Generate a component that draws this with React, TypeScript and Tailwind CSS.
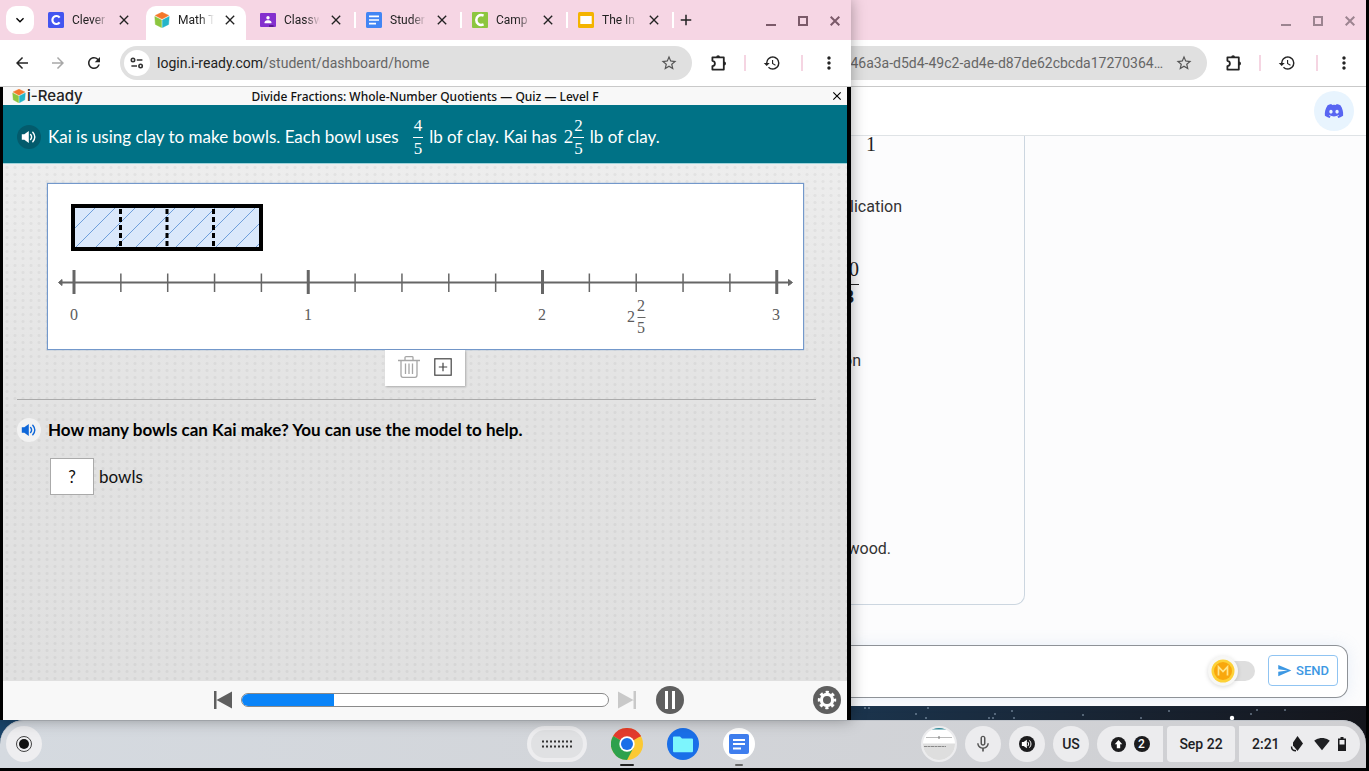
import React, { useState } from "react";
import {
  MdArrowBack,
  MdArrowForward,
  MdRefresh,
  MdStarBorder,
  MdHistory,
  MdMoreVert,
  MdSend,
  MdMicNone,
  MdClose,
  MdAdd,
  MdExpandMore,
  MdSignalWifi4Bar,
} from "react-icons/md";
import { FaDiscord } from "react-icons/fa";

const CubeIcon = ({ className }: { className: string }) => (
  <svg viewBox="0 0 16 16" className={className} aria-hidden="true">
    <path d="M8 0.3 14.6 3.4 8 7 1.4 3.4Z" fill="#f4772b" stroke="#f4772b" strokeWidth=".6" strokeLinejoin="round" />
    <path d="M.8 4.5 7.5 8.1V15.6L1.4 12.4Z" fill="#8cc63f" stroke="#8cc63f" strokeWidth=".5" strokeLinejoin="round" />
    <path d="M15.2 4.5 8.5 8.1V15.6L14.6 12.4Z" fill="#24b5c9" stroke="#24b5c9" strokeWidth=".5" strokeLinejoin="round" />
  </svg>
);

const SpeakerIcon = ({ className }: { className: string }) => (
  <svg viewBox="0 0 16 14" className={className} aria-hidden="true">
    <path d="M.8 4.300H3.300L7.800 1V13L3.300 9.700H.8Z" fill="currentColor" />
    <path d="M9.600 4.500Q11.600 7 9.600 9.500M11.800 2.300Q15.800 7 11.800 11.700" fill="none" stroke="currentColor" strokeWidth="1.400" strokeLinecap="round" />
  </svg>
);

const GearIcon = () => (
  <svg viewBox="0 0 20 20" className="size-5" fill="none" stroke="#fff" aria-hidden="true">
    <circle cx="10" cy="10" r="5.600" strokeWidth="3.200" />
    <circle cx="10" cy="10" r="7.900" strokeWidth="2.600" strokeDasharray="3.200 3.005" strokeDashoffset="1.600" />
  </svg>
);

const CleverIcon = () => (
  <svg viewBox="0 0 16 16" className="size-4 shrink-0">
    <rect width="16" height="16" rx="1.5" fill="#4355f0" />
    <path d="M11.6 5.6A4 4 0 1 0 11.6 10.4" fill="none" stroke="#fff" strokeWidth="2.2" />
  </svg>
);
const CampusIcon = () => (
  <svg viewBox="0 0 16 16" className="size-4 shrink-0">
    <rect width="16" height="16" rx="1" fill="#8dc63f" />
    <path d="M11.6 3.6C7 1.800 4.300 5 4.300 8S7 14.200 11.600 12.400" fill="none" stroke="#fff" strokeWidth="2.6" />
  </svg>
);
const ClassroomIcon = () => (
  <svg viewBox="0 0 16 16" className="size-4 shrink-0">
    <rect y="1" width="16" height="14" rx="1" fill="#8430ce" />
    <circle cx="8" cy="5.8" r="1.7" fill="#fff" />
    <path d="M4.6 11.2V10.2C4.6 8.9 6.6 8.3 8 8.3S11.4 8.9 11.4 10.2V11.2Z" fill="#fff" />
    <path d="M9 13h4.5v2H9z" fill="#5b1a94" />
  </svg>
);
const DocsIcon = () => (
  <svg viewBox="0 0 16 16" className="size-4 shrink-0">
    <rect width="16" height="16" rx="1.5" fill="#4285f4" />
    <path d="M3 4.3h10M3 8h10M3 11.7h7" stroke="#fff" strokeWidth="1.7" />
  </svg>
);
const SlidesIcon = () => (
  <svg viewBox="0 0 16 16" className="size-4 shrink-0">
    <rect width="16" height="16" rx="1.5" fill="#f4b400" />
    <rect x="2.3" y="4" width="11.4" height="8" fill="#fff" />
  </svg>
);

const ExtensionIcon = () => (
  <svg viewBox="0 0 18 18" className="size-[18px]" fill="none" stroke="#242424" strokeWidth="1.8" strokeLinejoin="round">
    <path d="M2.4 3.4H13.8V15.6H2.4V12.2C4 12 4.9 10.9 4.9 9.5S4 7 2.4 6.8Z" />
    <path d="M6.2 3.2a1.9 2 0 0 1 3.8 0ZM14 7.6a2 1.9 0 0 1 0 3.8Z" fill="#242424" stroke="none" />
  </svg>
);

const TuneIcon = () => (
  <svg viewBox="0 0 14 12" className="h-3 w-3.5" fill="none" stroke="#333" strokeWidth="1.6">
    <circle cx="3" cy="3" r="1.7" />
    <path d="M6.8 3H12.4M1.4 9H7" />
    <circle cx="10.6" cy="9" r="1.7" />
  </svg>
);

function WindowControls({ className }: { className: string }) {
  return (
    <div className={`flex items-center gap-[22px] ${className}`}>
      <button aria-label="Minimize">
        <svg viewBox="0 0 10 10" className="size-2.5"><path d="M0 9H10" stroke="currentColor" strokeWidth="2" /></svg>
      </button>
      <button aria-label="Maximize">
        <svg viewBox="0 0 10 10" className="size-2.5"><rect x="1" y="1" width="8" height="8" fill="none" stroke="currentColor" strokeWidth="2" /></svg>
      </button>
      <button aria-label="Close window">
        <svg viewBox="0 0 10 10" className="size-2.5"><path d="M.7.7 9.3 9.3M9.3.7.7 9.3" stroke="currentColor" strokeWidth="2" /></svg>
      </button>
    </div>
  );
}

function ToolbarEnd() {
  return (
    <div className="flex shrink-0 items-center pl-[18px] text-[#242424]">
      <button aria-label="Extensions"><ExtensionIcon /></button>
      <span className="ml-4 h-4 w-[2px] bg-[#f5d5e2]" />
      <button aria-label="History" className="ml-[17px]"><MdHistory className="size-[18px]" /></button>
      <span className="ml-5 h-4 w-[2px] bg-[#f5d5e2]" />
      <button aria-label="Menu" className="ml-4"><MdMoreVert className="size-5" /></button>
    </div>
  );
}

const tabs = [
  { title: "Clever", icon: <CleverIcon /> },
  { title: "Math T", icon: <CubeIcon className="size-4 shrink-0" />, active: true },
  { title: "Classw", icon: <ClassroomIcon /> },
  { title: "Studer", icon: <DocsIcon /> },
  { title: "Camp", icon: <CampusIcon /> },
  { title: "The In", icon: <SlidesIcon /> },
];

function TabStrip() {
  return (
    <div className="flex h-10 items-start bg-[#f6d6e4] pl-1.5">
      <button aria-label="Search tabs" className="mt-1.5 flex size-7 items-center justify-center rounded-[10px] bg-white">
        <MdExpandMore className="size-4" />
      </button>
      <div className="ml-1.5 flex h-10 items-start">
        {tabs.map((t, i) => (
          <React.Fragment key={t.title}>
            <div
              className={
                t.active
                  ? "mt-1.5 flex h-[34px] w-[100px] items-start rounded-t-[10px] bg-white px-2 pt-1.5"
                  : "mt-1.5 flex h-[34px] w-[100px] items-start px-2 pt-1.5"
              }
            >
              {t.icon}
              <button className="ml-2 w-9 overflow-hidden text-left text-[12px] leading-4 whitespace-nowrap text-[#222] [mask-image:linear-gradient(to_right,black_60%,transparent)]">
                {t.title}
              </button>
              <button aria-label={`Close ${t.title}`} className="ml-auto text-[#222]">
                <MdClose className="size-4" />
              </button>
            </div>
            <span className={i < 2 ? "mx-[2px] mt-3 h-4 w-[2px]" : "mx-[2px] mt-3 h-4 w-[2px] bg-white"} />
          </React.Fragment>
        ))}
      </div>
      <button aria-label="New tab" className="mt-[11px] ml-px text-[#222]"><MdAdd className="size-[18px]" /></button>
      <WindowControls className="mt-4 mr-[11px] ml-auto text-[#7b5a69]" />
    </div>
  );
}

function Fraction({ n, d, className }: { n: string; d: string; className: string }) {
  return (
    <span className={`inline-flex flex-col items-center font-['Liberation_Serif',serif] ${className}`}>
      <span className="px-px">{n}</span>
      <span className="border-t border-current px-px">{d}</span>
    </span>
  );
}

const hatch = Array.from({ length: 12 }, (_, i) => 71 + i * 20);

function NumberLine() {
  const step = 46.85;
  return (
    <svg viewBox="0 0 755 165" className="block w-full" role="img" aria-label="Number line">
      <defs>
        <clipPath id="bar"><rect x="26" y="23" width="186" height="42" /></clipPath>
      </defs>
      <rect x="25" y="22" width="188" height="43" fill="#dae8fb" />
      <g clipPath="url(#bar)" stroke="#6f9fdb" strokeWidth="1">
        {hatch.map((c) => (
          <path key={c} d={`M${c - 70} 70L${c - 15} 15`} />
        ))}
      </g>
      {[72.5, 119, 165.5].map((x) => (
        <path key={x} d={`M${x} 25V64`} stroke="#000" strokeWidth="3" strokeDasharray="5 3" />
      ))}
      <rect x="25" y="22" width="188" height="43" fill="none" stroke="#000" strokeWidth="4" />
      <g stroke="#666" fill="#666">
        <path d="M12 98.5H742" strokeWidth="2" />
        <path d="M10.500 98.500 14 95.500V101.500ZM744.500 98.500 740.500 95.500V101.500Z" />
        {Array.from({ length: 16 }, (_, i) => (
          <path
            key={i}
            d={i % 5 === 0 ? `M${26 + i * step} 86V110` : `M${26 + i * step} 89.500V108`}
            strokeWidth={i % 5 === 0 ? 3 : 1.5}
          />
        ))}
        <path d="M589.500 133.500H597.500" strokeWidth="1" />
      </g>
      <g fill="#5c5c5c" fontFamily="'Liberation Serif', serif" fontSize="16" textAnchor="middle">
        <text x="26" y="136">0</text>
        <text x="260" y="136">1</text>
        <text x="494" y="136">2</text>
        <text x="583" y="138">2</text>
        <text x="593" y="127">2</text>
        <text x="593" y="149">5</text>
        <text x="728" y="136">3</text>
      </g>
    </svg>
  );
}

function LessonWindow() {
  const [answer, setAnswer] = useState("?");
  return (
    <section className="relative z-10 flex min-w-0 flex-1 flex-col bg-white shadow-[0_0_14px_rgba(0,0,0,0.35)]">
      <TabStrip />
      <div className="flex h-[47px] shrink-0 items-center border-b border-[#c9c9c9] pr-3 pl-[13px]">
        <button aria-label="Back"><MdArrowBack className="size-[18px] text-[#242424]" /></button>
        <button aria-label="Forward" className="ml-[18px]"><MdArrowForward className="size-[18px] text-[#a8a8a8]" /></button>
        <button aria-label="Reload" className="ml-[18px]"><MdRefresh className="size-[18px] text-[#242424]" /></button>
        <div className="ml-[17px] flex h-[34px] flex-1 items-center rounded-full bg-[#e0e0e0] pr-3.5 pl-1">
          <button aria-label="Site information" className="flex size-[26px] items-center justify-center rounded-full bg-white"><TuneIcon /></button>
          <span className="ml-[7px] text-[14px] leading-5 text-[#222]">
            login.i-ready.com<span className="text-[#666]">/student/dashboard/home</span>
          </span>
          <button aria-label="Bookmark" className="ml-auto"><MdStarBorder className="size-[18px] text-[#555]" /></button>
        </div>
        <ToolbarEnd />
      </div>

      <div className="flex min-h-0 flex-1 flex-col border-r-4 border-l-[3px] border-black">
        <header className="grid h-[18px] shrink-0 grid-cols-[1fr_auto_1fr] items-center bg-[#f8f8f8]">
          <div className="flex items-center gap-px pl-[9px]">
            <CubeIcon className="size-3.5" />
            <span className="font-[Inter,sans-serif] text-[15px] leading-[18px] font-medium text-[#222]">i-Ready</span>
          </div>
          <h1 className="pt-0.5 font-['Noto_Sans',sans-serif] text-[12px] leading-4 font-medium text-[#111]">
            Divide Fractions: Whole-Number Quotients — Quiz — Level F
          </h1>
          <button aria-label="Close lesson" className="mr-[3px] justify-self-end"><MdClose className="size-3.5 text-black" /></button>
        </header>

        <div className="flex h-[59px] shrink-0 items-center border-b border-[#9fd3da] bg-[#007286] pt-1.5 pl-3.5 font-[Lato,sans-serif] text-[17px] text-white">
          <button aria-label="Read aloud" className="flex size-6 items-center justify-center rounded-full bg-[#035b6c]"><SpeakerIcon className="h-3.5 w-4" /></button>
          <p className="ml-[7px] flex items-center whitespace-nowrap">
            Kai is using clay to make bowls. Each bowl uses
            <Fraction n="4" d="5" className="mr-1.5 ml-3.5 text-[17px] leading-[22px]" />
            lb of clay. Kai has
            <span className="ml-[7px] font-['Liberation_Serif',serif] text-[19px]">2</span>
            <Fraction n="2" d="5" className="mr-1.5 text-[17px] leading-[22px]" />
            lb of clay.
          </p>
        </div>

        <main className="flex flex-1 flex-col bg-[radial-gradient(circle,rgba(0,0,0,0.045)_1px,transparent_2px),linear-gradient(#ededed,#e2e2e2_50%,#e0e0e0)] [background-size:8px_7px,100%_100%]">
          <div className="mt-[19px] mr-[43px] ml-11 border border-[#7398cb] bg-white shadow-[0_0_1px_#7398cb]">
            <NumberLine />
          </div>
          <div className="flex h-9 w-20 items-center justify-center gap-3.5 self-center bg-white pb-0.5 shadow-[1px_1px_2px_rgba(0,0,0,0.25)]">
            <button aria-label="Delete">
              <svg viewBox="0 0 22 22" className="size-[22px]" fill="none" stroke="#a6a6a6" strokeWidth="1.3">
                <path d="M0 4.500H22M7 4V1.500Q7 .7 8 .7H14Q15 .7 15 1.500V4M3 5V19Q3 21.300 5 21.300H17Q19 21.300 19 19V5M7.500 7.500V18M11 7.500V18M14.500 7.500V18" />
              </svg>
            </button>
            <button aria-label="Add">
              <svg viewBox="0 0 18 18" className="size-[18px]" fill="none" stroke="#444" strokeWidth="1.2">
                <rect x=".8" y=".8" width="16.400" height="16.400" />
                <path d="M9 4.800V13.200M4.800 9H13.200" />
              </svg>
            </button>
          </div>
          <hr className="mt-[13px] mr-[31px] ml-3.5 border-[#aaa]" />
          <div className="mt-[18px] flex items-center pl-3.5 font-[Lato,sans-serif] text-[17px] leading-6 font-bold text-black">
            <button aria-label="Read question" className="flex size-6 items-center justify-center rounded-full bg-[#f2f2f2] text-[#0d66d8]"><SpeakerIcon className="h-3.5 w-4" /></button>
            <p className="ml-[7px]">How many bowls can Kai make? You can use the model to help.</p>
          </div>
          <label className="mt-4 ml-[47px] flex items-center gap-[5px] font-[Lato,sans-serif] text-[17px] text-[#111]">
            <input
              value={answer}
              onChange={(e) => setAnswer(e.target.value)}
              className="h-[37px] w-11 border border-[#aaa] bg-white text-center text-[17px]"
            />
            bowls
          </label>
        </main>

        <footer className="grid h-[39px] shrink-0 grid-cols-[1fr_auto_1fr] items-center bg-[#f8f8f8] pb-px">
          <button aria-label="Previous" className="mr-[9px] justify-self-end">
            <svg viewBox="0 0 18 18" className="size-[18px]" fill="#5f5f5f"><path d="M0 0H2.500V18H0ZM18 .5V17.500L2.500 9Z" /></svg>
          </button>
          <div role="progressbar" aria-valuenow={25} aria-label="Lesson progress" className="h-3.5 w-[368px] overflow-hidden rounded-full border border-[#8a8a8a] bg-white">
            <div className="h-full w-1/4 bg-[#0a84f8]" />
          </div>
          <div className="flex items-center pl-[9px]">
            <button aria-label="Next">
              <svg viewBox="0 0 18 18" className="size-[18px]" fill="#c9c9c9"><path d="M15.500 0H18V18H15.500ZM0 .5V17.500L15.500 9Z" /></svg>
            </button>
            <button aria-label="Pause" className="ml-5 flex size-7 items-center justify-center gap-1 rounded-full bg-[#5f5f5f]">
              <span className="h-[18px] w-[3px] bg-white" />
              <span className="h-[18px] w-[3px] bg-white" />
            </button>
            <button aria-label="Settings" className="mr-1.5 ml-auto flex size-7 items-center justify-center rounded-full bg-[#5f5f5f] text-white">
              <GearIcon />
            </button>
          </div>
        </footer>
      </div>
    </section>
  );
}

function ChatWindow() {
  const [paid, setPaid] = useState(false);
  return (
    <section className="flex w-[515px] shrink-0 flex-col">
      <div className="flex min-h-0 flex-1 flex-col bg-[#fcfcfd]">
        <div className="flex h-10 shrink-0 items-start bg-[#f6d6e4]">
          <WindowControls className="mt-4 mr-[11px] ml-auto text-[#9c8490]" />
        </div>
        <div className="flex h-[47px] shrink-0 items-center border-b border-[#c9c9c9] bg-white pr-3">
          <div className="flex h-[34px] min-w-0 flex-1 items-center justify-end overflow-hidden rounded-r-full bg-[#e0e0e0] pr-3.5">
            <span className="mr-3 text-[14px] leading-5 whitespace-nowrap text-[#666]">46a3a-d5d4-49c2-ad4e-d87de62cbcda17270364…</span>
            <button aria-label="Bookmark"><MdStarBorder className="size-[18px] text-[#555]" /></button>
          </div>
          <ToolbarEnd />
        </div>
        <header className="flex h-[49px] shrink-0 items-center justify-end border-b border-[#dfe3e6] bg-white pr-3">
          <a href="#discord" aria-label="Discord" className="flex size-10 items-center justify-center rounded-full bg-[#e8f4fe] text-[#5865f2]"><FaDiscord className="size-5" /></a>
        </header>
        <div className="min-h-0 flex-1">
          <article className="flex h-[469px] w-[174px] flex-col overflow-hidden rounded-br-[10px] border-r border-b border-[#ccd6e0] text-[16px] leading-6 text-[#333]">
            <p className="flex h-[59px] w-[25px] justify-end font-['Liberation_Serif',serif] text-[20px] leading-4 text-[#222]">1</p>
            <p className="flex w-[51px] justify-end">lication</p>
            <div className="mt-9 flex h-[40px] w-2 flex-col items-end font-['Liberation_Serif',serif] text-[20px] leading-[22px] text-[#222]">
              <span className="flex h-[30px] items-end border-b border-[#222] pb-1">0</span>
            </div>
            <strong className="-mt-2 flex h-6 w-[3px] justify-end font-['Liberation_Serif',serif] text-[18px] leading-5 text-[#222]">3</strong>
            <p className="mt-[38px] flex w-[10px] justify-end">on</p>
            <p className="mt-[164px] flex w-10 justify-end">wood.</p>
          </article>
        </div>
        <form onSubmit={(e) => e.preventDefault()} className="mr-[18px] mb-2 flex h-[53px] shrink-0 items-center rounded-r-xl border-y border-r border-[#8e9297] bg-white pr-[9px] pb-0.5 shadow-[0_0_16px_rgba(140,180,220,0.18)]">
          <input aria-label="Message" className="h-full min-w-0 flex-1 bg-transparent outline-none" />
          <label className="relative flex h-8 w-12 cursor-pointer items-center justify-end">
            <input type="checkbox" aria-label="Premium mode" checked={paid} onChange={(e) => setPaid(e.target.checked)} className="sr-only" />
            <span className="h-5 w-9 rounded-full bg-[#dedede]" />
            <svg viewBox="0 0 32 32" className="absolute top-0 left-0 size-8 drop-shadow-sm">
              <circle cx="16" cy="16" r="15" fill="#f7f7f5" />
              <circle cx="16" cy="16" r="11.500" fill="#fdd137" />
              <circle cx="16" cy="16" r="9" fill="#f9a70c" />
              <path d="M11.500 20.500V11.800L16 16.500 20.500 11.800V20.500" fill="none" stroke="#ffe58a" strokeWidth="1.700" />
            </svg>
          </label>
          <button className="ml-[13px] flex h-[31px] items-center gap-1 rounded-[4px] border border-[#90c4f2] px-2 text-[13px] leading-5 font-medium text-[#3d98e3]">
            <MdSend className="size-[15px]" />
            SEND
          </button>
        </form>
      </div>
      <svg viewBox="0 0 515 14" className="h-3.5 w-full shrink-0" fill="#9fb2c6" aria-hidden="true">
        {[[14, 2], [18, 2], [65, 8], [77, 2], [75, 12], [138, 12], [144, 8], [142, 12], [161, 5], [163, 12], [232, 9], [290, 12], [318, 5], [400, 8], [406, 4], [434, 4]].map(([x, y]) => (
          <circle key={`${x}-${y}`} cx={x} cy={y} r="1" opacity=".6" />
        ))}
        <circle cx="381" cy="12" r="2.200" fill="#fff" />
      </svg>
    </section>
  );
}

const ChromeIcon = () => (
  <svg viewBox="0 0 32 32" className="size-8">
    <circle cx="16" cy="16" r="16" fill="#fbc934" />
    <path d="M16 16 2.140 8A16 16 0 0 1 29.860 8Z" fill="#e33b2e" />
    <path d="M16 8.500H29.900L29 6.700 16 6Z" fill="#e33b2e" />
    <path d="M2.140 8A16 16 0 0 0 16 32L22.500 19.800 16 16Z" fill="#2da14c" />
    <circle cx="16" cy="16" r="7.700" fill="#fff" />
    <circle cx="16" cy="16" r="6" fill="#1a6fe8" />
  </svg>
);

function Shelf() {
  return (
    <nav className="grid h-12 shrink-0 grid-cols-[1fr_auto_1fr] items-center rounded-t-[24px] bg-linear-to-r from-[#d5dae0] to-[#cfcfd2] px-1.5 shadow-[inset_0_1px_0_#bfc3c9]">
      <div className="flex items-center justify-between">
        <button aria-label="Launcher" className="flex size-9 items-center justify-center rounded-full bg-[#eeeef0]">
          <span className="flex size-4 items-center justify-center rounded-full border border-[#444]"><span className="size-2.5 rounded-full bg-[#111]" /></span>
        </button>
        <button aria-label="Desks" className="mr-4 flex h-9 w-[60px] items-center justify-center rounded-full border-4 border-[#ededef] bg-[#e0e1e3]">
          <svg viewBox="0 0 30 8" className="h-2 w-[30px]">
            <path d="M0 1.500H30M0 6.500H30" stroke="#333" strokeWidth="2" strokeDasharray="2 2" />
          </svg>
        </button>
      </div>
      <div className="flex gap-2">
        <button aria-label="Chrome" className="flex h-12 w-12 flex-col items-center gap-1 pt-2">
          <ChromeIcon />
          <span className="h-[2px] w-3.5 shrink-0 rounded-full bg-[#222]" />
        </button>
        <button aria-label="Files" className="flex h-12 w-12 flex-col items-center gap-1 pt-2">
          <svg viewBox="0 0 32 32" className="size-8">
            <circle cx="16" cy="16" r="16" fill="#1a6fe8" />
            <path d="M7 8.500H13L15 10.500H25Q26 10.500 26 11.500V23Q26 24.300 25 24.300H7Q6 24.300 6 23V9.500Q6 8.500 7 8.500Z" fill="#7df5fd" />
          </svg>
        </button>
        <button aria-label="Docs" className="flex h-12 w-12 flex-col items-center gap-1 pt-2">
          <svg viewBox="0 0 32 32" className="size-8">
            <circle cx="16" cy="16" r="16" fill="#fff" />
            <rect x="6" y="6" width="20" height="20" rx="2" fill="#3f7eee" />
            <path d="M10 12H22M10 16H22M10 20.500H18" stroke="#fff" strokeWidth="2" />
          </svg>
          <span className="h-[2px] w-2 shrink-0 rounded-full bg-[#666]" />
        </button>
      </div>
      <div className="flex items-center justify-end gap-2 text-[14px] leading-5 font-medium text-[#202124]">
        <button aria-label="Recent screenshot" className="flex size-9 flex-col items-center overflow-hidden rounded-full border-2 border-[#ececee] bg-white">
          <svg viewBox="0 0 32 32" className="size-8">
            <path d="M9 .8H23" stroke="#2f8796" strokeWidth="1.500" />
            <path d="M3 9.500H29" stroke="#aaa" strokeWidth=".8" />
            <path d="M16 8V11" stroke="#777" />
            <rect y="15.500" width="32" height="17" fill="#dedede" />
            <path d="M1 18.500H23" stroke="#888" strokeWidth="1" strokeDasharray="3 .5" />
          </svg>
        </button>
        <button aria-label="Microphone" className="flex size-9 items-center justify-center rounded-full bg-[#ececee] text-[#555]"><MdMicNone className="size-5" /></button>
        <button aria-label="Media" className="flex size-9 items-center justify-center rounded-full bg-[#ececee]">
          <span className="flex size-4 items-center justify-center rounded-full bg-[#1c1c1e] text-white"><SpeakerIcon className="h-2.5 w-3" /></span>
        </button>
        <button className="size-9 rounded-full bg-[#ececee]">US</button>
        <div className="flex gap-1">
          <button aria-label="Notifications" className="flex h-9 w-[66px] items-center justify-center gap-2 rounded-l-full rounded-r-[4px] bg-[#ececee]">
            <svg viewBox="0 0 16 16" className="size-[15px]"><circle cx="8" cy="8" r="8" fill="#1c1c1e" /><path d="M8 3.300 12 7.700H9.800V12H6.200V7.700H4Z" fill="#fff" /></svg>
            <span className="flex size-4 items-center justify-center rounded-full bg-[#1c1c1e] text-[12px] leading-4 text-white">2</span>
          </button>
          <button className="h-9 w-[68px] rounded-[4px] bg-[#ececee]">Sep 22</button>
          <button className="flex h-9 w-[121px] items-center rounded-l-[4px] rounded-r-full bg-[#ececee] pl-[13px]">
            2:21
            <svg viewBox="0 0 14 16" className="ml-2.5 h-4 w-3.5" fill="#1c1c1e"><path d="M7.500 0 13 7.500 7.500 15 3 9.500V6.500Z" /><path d="M1.500 10.500Q1.500 14.800 6 14.800" fill="none" stroke="#1c1c1e" strokeWidth="1.400" /></svg>
            <MdSignalWifi4Bar className="ml-2.5 size-4" />
            <svg viewBox="0 0 8 14" className="ml-2 h-3.5 w-2"><path d="M2.500 0H5.500V1.500H8V14H0V1.500H2.500ZM1.500 3V7.500H6.500V3Z" fill="#1c1c1e" fillRule="evenodd" /></svg>
          </button>
        </div>
      </div>
    </nav>
  );
}

export default function App() {
  return (
    <div className="flex h-screen flex-col overflow-hidden bg-black pr-[3px] pb-[3px] font-[Roboto,sans-serif]">
      <div className="flex min-h-0 flex-1 flex-col bg-linear-to-r from-[#1a4469] via-[#1b3650] via-60% to-[#14151b]">
        <div className="flex min-h-0 flex-1">
          <LessonWindow />
          <ChatWindow />
        </div>
        <Shelf />
      </div>
    </div>
  );
}
